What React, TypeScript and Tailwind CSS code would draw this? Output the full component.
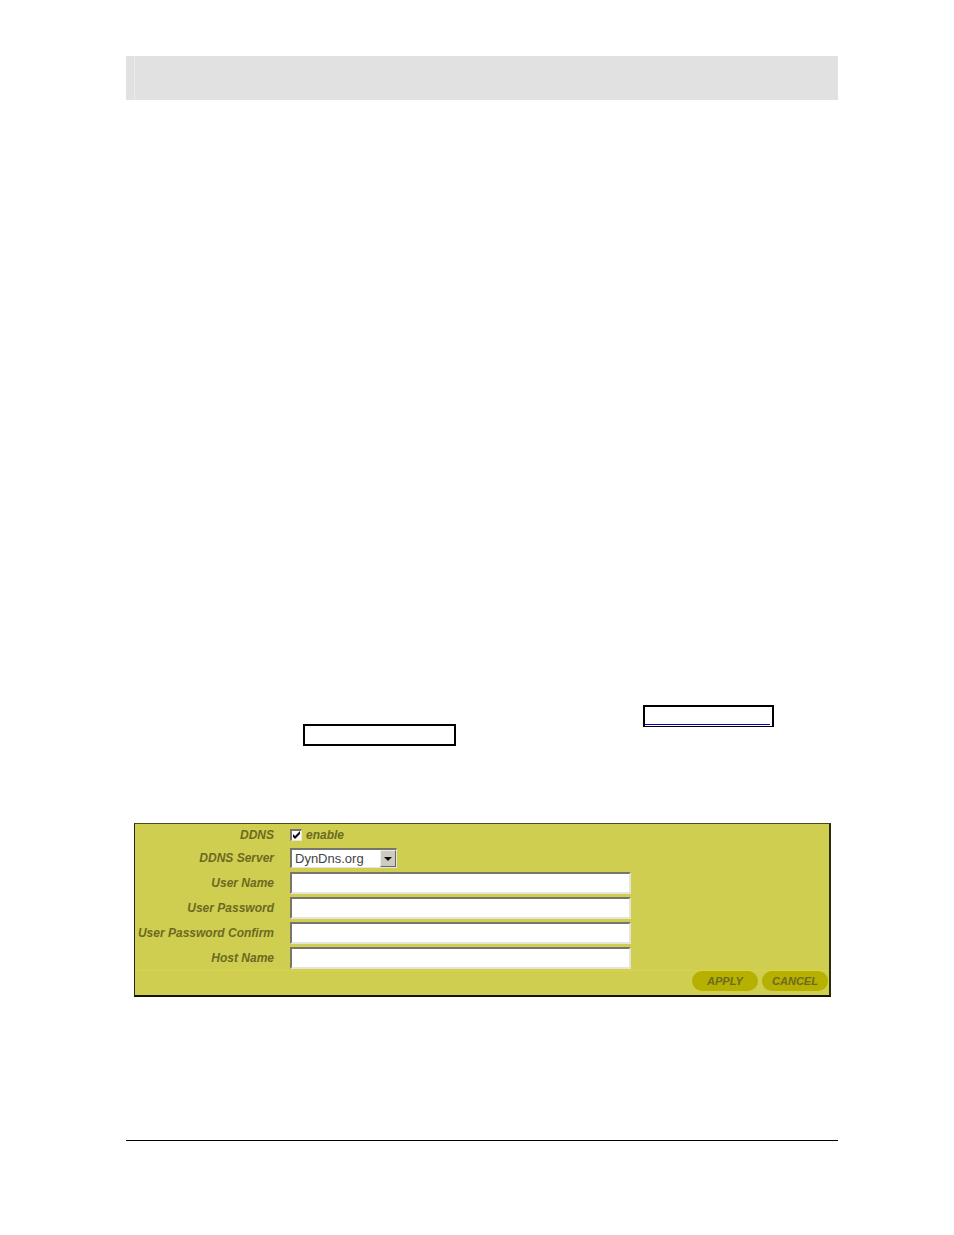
import React, { useState } from 'react'

const fields = [
  { id: 'user-name', label: 'User Name', type: 'text' },
  { id: 'user-password', label: 'User Password', type: 'password' },
  { id: 'user-password-confirm', label: 'User Password Confirm', type: 'password' },
  { id: 'host-name', label: 'Host Name', type: 'text' },
]

const FieldLabel: React.FC<{ id: string; children: React.ReactNode }> = ({ id, children }) => (
  <label htmlFor={id} className="w-[139px] shrink-0 text-right whitespace-nowrap">
    {children}
  </label>
)

const DdnsForm: React.FC = () => {
  const [enabled, setEnabled] = useState(true)

  return (
    <form
      onSubmit={(e) => e.preventDefault()}
      className="ml-2 mr-[7px] border-t border-l border-r-2 border-b-2 border-t-[#4a4917] border-l-[#2b2a0c] border-r-[#2b2a0c] border-b-[#141404] bg-[#cfce50] text-[12px] leading-4 font-bold italic text-[#6c6a22]"
    >
      <div className="flex h-[22px] items-center gap-4">
        <FieldLabel id="ddns">DDNS</FieldLabel>
        <div className="flex items-center gap-1">
          <span className="relative flex">
            <input
              id="ddns"
              type="checkbox"
              checked={enabled}
              onChange={(e) => setEnabled(e.target.checked)}
              className="size-3 appearance-none border-t-2 border-l-2 border-r border-b border-t-[#77766a] border-l-[#77766a] border-r-[#e6e5dc] border-b-[#e6e5dc] bg-white"
            />
            {enabled && (
              <svg viewBox="0 0 12 12" className="pointer-events-none absolute inset-0 size-3">
                <path d="M3 5v3l2 2 5-5V2L5 7z" fill="#111" />
              </svg>
            )}
          </span>
          <label htmlFor="ddns">enable</label>
        </div>
      </div>

      <div className="flex h-6 items-center gap-4">
        <FieldLabel id="ddns-server">DDNS Server</FieldLabel>
        <div className="relative">
          <select
            id="ddns-server"
            className="block h-5 w-[107px] appearance-none border-t-2 border-l-2 border-r border-b border-t-[#77766a] border-l-[#77766a] border-r-[#e6e5dc] border-b-[#e6e5dc] bg-white pl-[3px] text-[13px] leading-4 font-normal not-italic text-[#444]"
          >
            <option>DynDns.org</option>
          </select>
          <span className="pointer-events-none absolute top-[2px] right-px flex h-[17px] w-4 items-center justify-center border border-t-[#eeeeea] border-l-[#eeeeea] border-r-[#666] border-b-[#666] bg-[#cdcac2]">
            <svg viewBox="0 0 8 4" className="h-1 w-2">
              <path d="M0 0h8L4 4z" fill="#111" />
            </svg>
          </span>
        </div>
      </div>

      {fields.map((field) => (
        <div key={field.id} className="flex h-[25px] items-center gap-4">
          <FieldLabel id={field.id}>{field.label}</FieldLabel>
          <input
            id={field.id}
            type={field.type}
            className="h-[22px] w-[341px] min-w-0 border-2 border-t-[#77766a] border-l-[#77766a] border-r-[#e6e5dc] border-b-[#e6e5dc] bg-white px-1 font-normal not-italic text-[#444]"
          />
        </div>
      ))}

      <div className="flex h-[25px] justify-end gap-1 border-t border-[#d8d548] pr-px">
        <button type="submit" className="h-5 w-[66px] rounded-full bg-[#b6b000] text-[11px] font-bold italic">
          APPLY
        </button>
        <button type="reset" className="h-5 w-[66px] rounded-full bg-[#b6b000] text-[11px] font-bold italic">
          CANCEL
        </button>
      </div>
    </form>
  )
}

export default function App() {
  return (
    <div
      className="min-h-screen bg-white pt-14 pr-[116px] pl-[126px]"
      style={{ fontFamily: "'Liberation Sans', Arial, sans-serif" }}
    >
      <header className="h-11 bg-[#e1e1e1] pl-2">
        <div className="h-full border-l border-[#ececec]" />
      </header>

      <main className="pt-[605px]">
        {/* Framed links */}
        <div className="mb-[77px] flex items-start justify-between pr-16 pl-[177px]">
          <a href="#ddns" aria-label="DDNS settings" className="mt-[19px] block h-[22px] w-[153px] border-2 border-black" />
          <a
            href="#ddns-server"
            aria-label="DDNS server"
            className="block h-[22px] w-[131px] border-2 border-b border-black pr-[2px] pb-px"
          >
            <span className="block h-full border-b border-[#0000c8]" />
          </a>
        </div>

        <DdnsForm />
      </main>

      <footer className="mt-[143px] border-t border-black" />
    </div>
  )
}
